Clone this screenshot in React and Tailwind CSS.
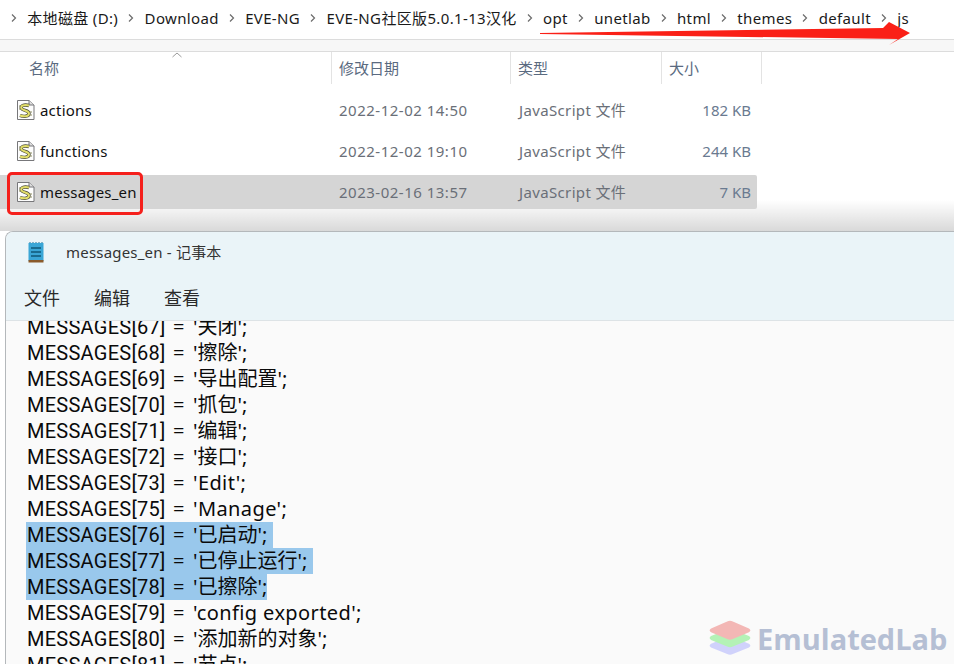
const sans = "font-['Noto_Sans','Noto_Sans_CJK_SC',sans-serif]";

const crumbs = ["本地磁盘 (D:)", "Download", "EVE-NG", "EVE-NG社区版5.0.1-13汉化", "opt", "unetlab", "html", "themes", "default", "js"];

const files = [
  { name: "actions", date: "2022-12-02 14:50", size: "182 KB" },
  { name: "functions", date: "2022-12-02 19:10", size: "244 KB" },
  { name: "messages_en", date: "2023-02-16 13:57", size: "7 KB", selected: true },
];

const lines = [
  { n: "67", t: "关闭" },
  { n: "68", t: "擦除" },
  { n: "69", t: "导出配置" },
  { n: "70", t: "抓包" },
  { n: "71", t: "编辑" },
  { n: "72", t: "接口" },
  { n: "73", t: "Edit", latin: true },
  { n: "75", t: "Manage", latin: true },
  { n: "76", t: "已启动", hl: "pr-[6px]" },
  { n: "77", t: "已停止运行", hl: "pr-[6px]" },
  { n: "78", t: "已擦除", hl: "pr-0" },
  { n: "79", t: "config exported", latin: true },
  { n: "80", t: "添加新的对象" },
  { n: "81", t: "节点" },
];

function Chevron() {
  return (
    <svg width="6" height="8" viewBox="0 0 6 8" className="shrink-0">
      <path d="M1 0.5 L4.5 4 L1 7.5" fill="none" stroke="#6b6b6b" strokeWidth="1.2" />
    </svg>
  );
}

function ScriptIcon() {
  return (
    <svg width="18" height="20" viewBox="0 0 18 20" className="shrink-0">
      <path d="M0.5 0.5 H12 L17 5 V19.5 H0.5 Z" fill="#fdfdfd" stroke="#77777a" />
      <path d="M12 0.5 V5 H17" fill="#dedede" stroke="#77777a" />
      <path d="M12 5.5 C7 4 3 6 4.5 8.5 C6 11 12 10 12 13.5 C12 16.5 7 17 3 15.5" fill="none" stroke="#4c4c3a" strokeWidth="3.4" />
      <path d="M12 5.5 C7 4 3 6 4.5 8.5 C6 11 12 10 12 13.5 C12 16.5 7 17 3 15.5" fill="none" stroke="#e2de6a" strokeWidth="2" />
      <path d="M2 6 H4 M2 9 H4 M13 12 H15 M13 15 H15" stroke="#8c8c60" />
    </svg>
  );
}

function NotepadIcon() {
  return (
    <svg width="16" height="21" viewBox="0 0 16 21" className="shrink-0">
      <rect x="0.5" y="1" width="15" height="18" fill="#3aa6d6" />
      <rect x="0.5" y="18" width="15" height="2.5" fill="#8a5a2b" />
      <path d="M2 1 V0 M5 1 V0 M8 1 V0 M11 1 V0 M14 1 V0" stroke="#1c6f96" />
      <path d="M3 6 H13 M3 10 H13 M3 14 H13" stroke="#0f5878" strokeWidth="1.5" />
    </svg>
  );
}

function Logo() {
  return (
    <svg width="44" height="36" viewBox="0 0 46 38" className="shrink-0">
      <path d="M23 17 L43 25 Q46 27 43 29 L26 36 Q23 37.5 20 36 L3 29 Q0 27 3 25 Z" fill="#d0d2fb" />
      <path d="M23 9 L43 17 Q46 19 43 21 L26 28 Q23 29.5 20 28 L3 21 Q0 19 3 17 Z" fill="#b4f2b6" />
      <path d="M20 1.5 Q23 0 26 1.5 L43 9 Q46 11 43 13 L26 20 Q23 21.5 20 20 L3 13 Q0 11 3 9 Z" fill="#f3b7b5" />
    </svg>
  );
}

export default function App() {
  return (
    <div className={`relative h-[664px] w-[954px] overflow-hidden bg-white ${sans}`}>
      {/* explorer */}
      <div className="flex h-[39px] items-center pb-[3px] pl-[11px] text-[15px] tracking-[0.35px] whitespace-nowrap text-[#1a1a1a]">
        {crumbs.map((c) => (
          <div key={c} className="flex items-center">
            <Chevron />
            <span className="px-[10.2px]">{c}</span>
          </div>
        ))}
      </div>
      <div className="h-[13px] border-y border-[#dcdcdc] bg-[#f7f7f7]" />
      <div className="relative flex h-[32px] text-[15px] text-[#5a6a80]">
        <div className="w-[332px] border-r border-[#e3e3e3] pt-[5px] pl-[29px]">名称</div>
        <div className="w-[179px] border-r border-[#e3e3e3] pt-[5px] pl-[7px]">修改日期</div>
        <div className="w-[151px] border-r border-[#e3e3e3] pt-[5px] pl-[7px]">类型</div>
        <div className="w-[100px] border-r border-[#e3e3e3] pt-[5px] pl-[7px]">大小</div>
        <svg width="10" height="6" viewBox="0 0 10 6" className="absolute top-0 left-[172px]">
          <path d="M0.5 5 L5 1 L9.5 5" fill="none" stroke="#9a9a9a" />
        </svg>
      </div>
      <div className="flex flex-col gap-[7px] pt-[9px]">
        {files.map((f) => (
          <div
            key={f.name}
            className={`relative z-10 flex h-[34px] w-[757px] items-center rounded-r-[2px] text-[15px] ${f.selected ? "bg-[#d5d5d5]" : ""}`}
          >
            <div className="flex w-[339px] items-center gap-[5px] pl-[17px] tracking-[0.2px] text-[#111]">
              <ScriptIcon />
              {f.name}
            </div>
            <div className="w-[180px] tracking-[0.5px] text-[#6a6f78]">{f.date}</div>
            <div className="w-[143px] tracking-[0.35px] text-[#6a6f78]">JavaScript 文件</div>
            <div className="w-[89px] text-right text-[#6a7a90]">{f.size}</div>
          </div>
        ))}
      </div>

      {/* red highlight around the selected file */}
      <div className="absolute top-[172px] left-[7px] z-20 h-[43px] w-[136px] rounded-[5px] border-[3px] border-[#f5201c]" />

      {/* arrow under the path */}
      <svg width="375" height="24" viewBox="0 0 375 24" className="absolute top-[22px] left-[539px]">
        <path d="M1 11 L344 6 L350 0 L371 11 L350 23 L359 17 L1 12 Z" fill="#fa2017" />
      </svg>

      {/* notepad window */}
      <div className="absolute top-[231px] left-[5px] h-[440px] w-[960px] overflow-hidden rounded-tl-[8px] border-t border-l border-[#b4b8bb] bg-[#fafafa]">
        <div className="h-[89px] border-b border-[#dde3e6] bg-[#eaf4f8]">
          <div className="flex h-[40px] items-center gap-[22px] pl-[22px] text-[15px] tracking-[0.2px] text-[#333]">
            <NotepadIcon />
            messages_en - 记事本
          </div>
          <div className="flex gap-[34px] pt-[13px] pl-[18px] text-[18px] text-[#2a2a2a]">
            <span>文件</span>
            <span>编辑</span>
            <span>查看</span>
          </div>
        </div>
        <div className="h-[350px] overflow-hidden">
          <div className="-mt-[7px] flex flex-col items-start pl-[20px] text-[20px] leading-[26px] text-[#0a0a0a]">
            {lines.map((l) => (
              <div key={l.n} className={`flex pl-[1px] whitespace-pre ${l.hl ? `bg-[#99c8ec] ${l.hl}` : ""}`}>
                <span className="w-[146px] font-['Roboto',sans-serif] tracking-[0.25px]">{`MESSAGES[${l.n}]`}</span>
                <span className="w-[20px]">=</span>
                <span className={l.latin ? "tracking-[0.4px]" : ""}>{`'${l.t}';`}</span>
              </div>
            ))}
          </div>
        </div>
      </div>

      {/* soft shadow above the notepad window */}
      <div className="absolute top-[200px] right-0 left-0 h-[31px] bg-gradient-to-b from-transparent to-black/15" />

      {/* watermark */}
      <div className="absolute top-[620px] left-[708px] flex items-center gap-[5px] font-['Open_Sans',sans-serif] text-[29px] leading-none font-bold text-[#b5bfd4]">
        <Logo />
        EmulatedLab
      </div>
    </div>
  );
}
